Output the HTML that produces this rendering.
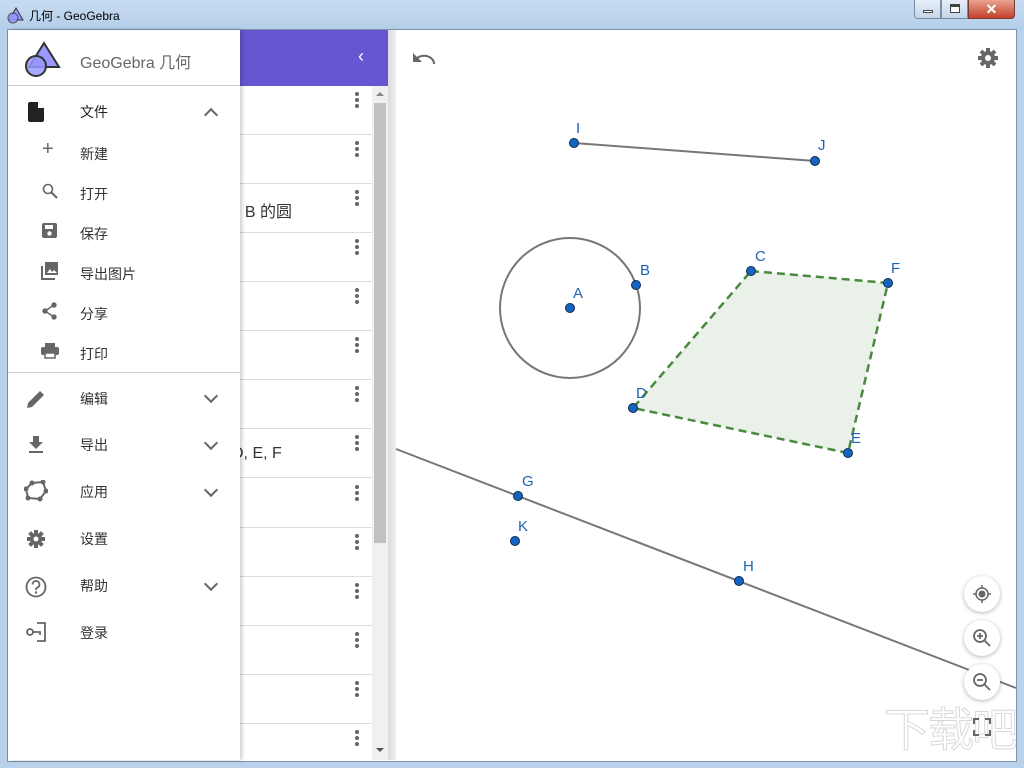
<!DOCTYPE html>
<html><head><meta charset="utf-8"><style>
*{margin:0;padding:0;box-sizing:border-box}
html,body{width:1024px;height:768px;overflow:hidden}
body{background:#b9d1ea;font-family:"Liberation Sans","Noto Sans CJK SC",sans-serif;position:relative}
.title{position:absolute;left:0;top:0;width:1024px;height:30px;background:linear-gradient(#c7dcf1,#b4cde8)}
.title span{position:absolute;left:29px;top:7px;font-size:12px;color:#000}
.frame{position:absolute;left:7px;top:29px;width:1010px;height:733px;background:#fff;border:1px solid #7c93ad}
.abs{position:absolute}
.menu{position:absolute;left:8px;top:30px;width:232px;height:730px;background:#fff;box-shadow:2px 0 4px rgba(0,0,0,.2);z-index:5}
.mi{position:absolute;left:72px;font-size:14px;color:#333}
.sep{position:absolute;left:0;width:232px;height:1px;background:#ccc}
.chev{position:absolute;left:198px;width:10px;height:10px;border-right:2px solid #666;border-bottom:2px solid #666;transform:rotate(45deg)}
.row{position:absolute;left:240px;width:132px;height:1px;background:#ddd}
.dots{position:absolute;left:355px;width:4px}
.dots i{display:block;width:4px;height:4px;border-radius:2px;background:#666;margin-bottom:2px}
.btn{position:absolute;left:964px;width:36px;height:36px;border-radius:18px;background:#fff;box-shadow:0 1px 4px rgba(0,0,0,.3)}
</style></head><body>
<div class="title"><svg class="abs" style="left:6px;top:6px" width="18" height="18"><polygon points="10,2 17,14 3,14" fill="#99f" stroke="#333"/><circle cx="7" cy="12" r="5" fill="#99f" stroke="#333" opacity=".8"/></svg><span>几何 - GeoGebra</span>
<div class="abs" style="left:914px;top:0;width:27px;height:19px;background:linear-gradient(#e6eef8,#c5d6ea);border:1px solid #7c8ea6;border-top:none;border-radius:0 0 0 4px"><div class="abs" style="left:8px;top:10px;width:10px;height:3px;background:#fff;border:1px solid #444"></div></div>
<div class="abs" style="left:941px;top:0;width:27px;height:19px;background:linear-gradient(#e6eef8,#c5d6ea);border:1px solid #7c8ea6;border-top:none"><div class="abs" style="left:8px;top:4px;width:10px;height:9px;border:1px solid #444;border-top-width:3px;background:#fff"></div></div>
<div class="abs" style="left:968px;top:0;width:47px;height:19px;background:linear-gradient(#e8a393,#c4412a);border:1px solid #7a3a30;border-top:none;border-radius:0 0 4px 0;color:#fff;font-size:14px;font-weight:bold;text-align:center;line-height:18px">✕</div>
</div>
<div class="frame"></div>
<div class="abs" style="left:240px;top:30px;width:148px;height:56px;background:#6557d2"></div>
<div class="abs" style="left:358px;top:46px;color:#fff;font-size:18px">‹</div>
<div class="abs" style="left:372px;top:86px;width:16px;height:674px;background:#f0f0f0"></div>
<div class="abs" style="left:374px;top:103px;width:12px;height:440px;background:#c1c1c1"></div>
<div class="abs" style="left:376px;top:92px;border:4px solid transparent;border-bottom:4px solid #888;border-top:none;width:0"></div>
<div class="abs" style="left:376px;top:748px;border:4px solid transparent;border-top:4px solid #555;border-bottom:none;width:0"></div>
<div class="abs" style="left:388px;top:30px;width:8px;height:730px;background:linear-gradient(90deg,#ddd,#eee)"></div>
<div class="row" style="top:134px"></div><div class="row" style="top:183px"></div><div class="row" style="top:232px"></div><div class="row" style="top:281px"></div><div class="row" style="top:330px"></div><div class="row" style="top:379px"></div><div class="row" style="top:428px"></div><div class="row" style="top:477px"></div><div class="row" style="top:527px"></div><div class="row" style="top:576px"></div><div class="row" style="top:625px"></div><div class="row" style="top:674px"></div><div class="row" style="top:723px"></div>
<div class="dots" style="top:92px"><i></i><i></i><i></i></div><div class="dots" style="top:141px"><i></i><i></i><i></i></div><div class="dots" style="top:190px"><i></i><i></i><i></i></div><div class="dots" style="top:239px"><i></i><i></i><i></i></div><div class="dots" style="top:288px"><i></i><i></i><i></i></div><div class="dots" style="top:337px"><i></i><i></i><i></i></div><div class="dots" style="top:386px"><i></i><i></i><i></i></div><div class="dots" style="top:435px"><i></i><i></i><i></i></div><div class="dots" style="top:485px"><i></i><i></i><i></i></div><div class="dots" style="top:534px"><i></i><i></i><i></i></div><div class="dots" style="top:583px"><i></i><i></i><i></i></div><div class="dots" style="top:632px"><i></i><i></i><i></i></div><div class="dots" style="top:681px"><i></i><i></i><i></i></div><div class="dots" style="top:730px"><i></i><i></i><i></i></div>
<div class="abs" style="left:236px;top:198px;font-size:16px;color:#333;white-space:nowrap">: B 的圆</div>
<div class="abs" style="left:232px;top:445px;font-size:16px;color:#333;white-space:nowrap">D, E, F</div>
<svg class="abs" style="left:0;top:0" width="1024" height="768">
<g fill="none" stroke="#666" stroke-width="2"><path d="M417 58 a10 8 0 0 1 17 6"/></g><path d="M413 53 l0 9 l9 0z" fill="#666"/>
<line x1="396" y1="449" x2="1016" y2="688" stroke="#777" stroke-width="2"/>
<line x1="574" y1="143" x2="815" y2="161" stroke="#777" stroke-width="2"/>
<circle cx="570" cy="308" r="70" fill="none" stroke="#777" stroke-width="2"/>
<polygon points="751,271 888,283 848,453 633,408" fill="#e9f1e8" stroke="#4a8a3f" stroke-width="2.5" stroke-dasharray="8,5"/>
<g fill="#1565c0" stroke="#0b2a50" stroke-width="1">
<circle cx="574" cy="143" r="4.5"/><circle cx="815" cy="161" r="4.5"/><circle cx="570" cy="308" r="4.5"/><circle cx="636" cy="285" r="4.5"/><circle cx="751" cy="271" r="4.5"/><circle cx="888" cy="283" r="4.5"/><circle cx="633" cy="408" r="4.5"/><circle cx="848" cy="453" r="4.5"/><circle cx="518" cy="496" r="4.5"/><circle cx="739" cy="581" r="4.5"/><circle cx="515" cy="541" r="4.5"/></g>
<g fill="#1e63b4" font-family="Liberation Sans" font-size="15">
<text x="576" y="133">I</text><text x="818" y="150">J</text><text x="573" y="298">A</text><text x="640" y="275">B</text><text x="755" y="261">C</text><text x="891" y="273">F</text><text x="636" y="398">D</text><text x="851" y="443">E</text><text x="522" y="486">G</text><text x="743" y="571">H</text><text x="518" y="531">K</text></g>
<g transform="translate(988,58)" fill="#666"><circle r="7"/><g stroke="#666" stroke-width="4"><line y1="-10" y2="10"/><line x1="-10" x2="10"/><line x1="-7" y1="-7" x2="7" y2="7"/><line x1="7" y1="-7" x2="-7" y2="7"/></g><circle r="3" fill="#fff"/></g>
</svg>
<div class="abs" style="left:884px;top:700px;width:132px;height:60px;overflow:hidden;font-size:46px;line-height:60px;color:transparent;-webkit-text-stroke:1px rgba(190,190,190,.6);white-space:nowrap;letter-spacing:-2px">下载吧</div>
<div class="btn" style="top:576px"><svg width="36" height="36"><circle cx="18" cy="18" r="6" fill="none" stroke="#666" stroke-width="1.5"/><circle cx="18" cy="18" r="3.5" fill="#666"/><path d="M18 9v3M18 24v3M9 18h3M24 18h3" stroke="#666" stroke-width="1.5"/></svg></div>
<div class="btn" style="top:620px"><svg width="36" height="36"><circle cx="16" cy="16" r="6" fill="none" stroke="#666" stroke-width="1.8"/><path d="M20 20l6 6M13 16h6M16 13v6" stroke="#666" stroke-width="1.8"/></svg></div>
<div class="btn" style="top:664px"><svg width="36" height="36"><circle cx="16" cy="16" r="6" fill="none" stroke="#666" stroke-width="1.8"/><path d="M20 20l6 6M13 16h6" stroke="#666" stroke-width="1.8"/></svg></div>
<svg class="abs" style="left:972px;top:717px" width="20" height="20"><path d="M2 7V2h5M13 2h5v5M18 13v5h-5M7 18H2v-5" fill="none" stroke="#666" stroke-width="2"/></svg>
<div class="menu">
<svg class="abs" style="left:14px;top:10px" width="40" height="40"><polygon points="22,3 37,27 7,27" fill="#99f" stroke="#333" stroke-width="2"/><circle cx="14" cy="26" r="10" fill="#99f" stroke="#333" stroke-width="2" fill-opacity=".85"/></svg>
<div class="abs" style="left:72px;top:19px;font-size:16px;color:#666">GeoGebra 几何</div>
<div class="sep" style="top:55px"></div>
<svg class="abs" style="left:20px;top:72px" width="16" height="20"><path d="M2 0h8l6 6v12a2 2 0 0 1-2 2H2a2 2 0 0 1-2-2V2a2 2 0 0 1 2-2z" fill="#222"/><path d="M10 0v6h6" fill="#fff"/></svg>
<div class="mi" style="top:72px;color:#222">文件</div>
<div class="chev" style="top:80px;transform:rotate(225deg)"></div>
<div class="abs" style="left:34px;top:108px;font-size:20px;color:#666;font-weight:300">+</div><div class="mi" style="top:114px">新建</div>
<svg class="abs" style="left:34px;top:153px" width="16" height="16"><circle cx="6" cy="6" r="4.5" fill="none" stroke="#666" stroke-width="1.6"/><path d="M9 9l6 6" stroke="#666" stroke-width="2"/></svg><div class="mi" style="top:154px">打开</div>
<svg class="abs" style="left:34px;top:193px" width="16" height="16"><rect x="0" y="0" width="15" height="15" rx="2" fill="#666"/><rect x="3" y="2" width="8" height="4" fill="#fff"/><circle cx="7.5" cy="10.5" r="2.2" fill="#fff"/></svg><div class="mi" style="top:194px">保存</div>
<svg class="abs" style="left:33px;top:232px" width="18" height="18"><path d="M1 4v13h13" fill="none" stroke="#666" stroke-width="2"/><rect x="4" y="0" width="13" height="13" fill="#666"/><path d="M6 11l3-4 2 3 2-2 3 3z" fill="#fff"/></svg><div class="mi" style="top:234px">导出图片</div>
<svg class="abs" style="left:34px;top:272px" width="16" height="18"><path d="M12 3L3 9l9 6" fill="none" stroke="#666" stroke-width="1.5"/><circle cx="12" cy="3" r="2.7" fill="#666"/><circle cx="3" cy="9" r="2.7" fill="#666"/><circle cx="12" cy="15" r="2.7" fill="#666"/></svg><div class="mi" style="top:274px">分享</div>
<svg class="abs" style="left:33px;top:313px" width="18" height="16"><rect x="4" y="0" width="10" height="4" fill="#666"/><rect x="0" y="4" width="18" height="8" rx="2" fill="#666"/><rect x="4" y="10" width="10" height="5" fill="#fff" stroke="#666" stroke-width="1.5"/></svg><div class="mi" style="top:314px">打印</div>
<div class="sep" style="top:342px"></div>
<svg class="abs" style="left:18px;top:359px" width="20" height="20"><path d="M1 19l1-5L14 2l4 4L6 18z" fill="#666"/></svg><div class="mi" style="top:359px">编辑</div><div class="chev" style="top:361px"></div>
<svg class="abs" style="left:19px;top:406px" width="18" height="18"><path d="M6 0h6v6h4l-7 7-7-7h4z" fill="#666"/><rect x="2" y="15" width="14" height="2" fill="#666"/></svg><div class="mi" style="top:405px">导出</div><div class="chev" style="top:408px"></div>
<svg class="abs" style="left:16px;top:450px" width="24" height="22"><path d="M8 3L19 2 22 11 16 19 4 18 2 9z" fill="none" stroke="#666" stroke-width="2"/><g fill="#666"><circle cx="8" cy="3" r="2.5"/><circle cx="19" cy="2" r="2.5"/><circle cx="22" cy="11" r="2.5"/><circle cx="16" cy="19" r="2.5"/><circle cx="4" cy="18" r="2.5"/><circle cx="2" cy="9" r="2.5"/></g></svg><div class="mi" style="top:452px">应用</div><div class="chev" style="top:455px"></div>
<svg class="abs" style="left:18px;top:499px" width="20" height="20" viewBox="-10 -10 20 20"><circle r="6" fill="#666"/><g stroke="#666" stroke-width="4"><line y1="-9" y2="9"/><line x1="-9" x2="9"/><line x1="-6.4" y1="-6.4" x2="6.4" y2="6.4"/><line x1="6.4" y1="-6.4" x2="-6.4" y2="6.4"/></g><circle r="2.5" fill="#fff"/></svg><div class="mi" style="top:499px">设置</div>
<svg class="abs" style="left:17px;top:546px" width="22" height="22"><circle cx="11" cy="11" r="9.5" fill="none" stroke="#666" stroke-width="1.8"/><path d="M7.5 8.5a3.5 3.5 0 1 1 4.5 3.3c-1 .4-1 1-1 2.2" fill="none" stroke="#666" stroke-width="1.8"/><circle cx="11" cy="16.5" r="1.2" fill="#666"/></svg><div class="mi" style="top:546px">帮助</div><div class="chev" style="top:549px"></div>
<svg class="abs" style="left:18px;top:592px" width="22" height="20"><circle cx="4" cy="10" r="3" fill="none" stroke="#666" stroke-width="1.8"/><path d="M7 10h7v3M11 1h8v18h-8" fill="none" stroke="#666" stroke-width="1.8"/></svg><div class="mi" style="top:593px">登录</div>
</div>
</body></html>
